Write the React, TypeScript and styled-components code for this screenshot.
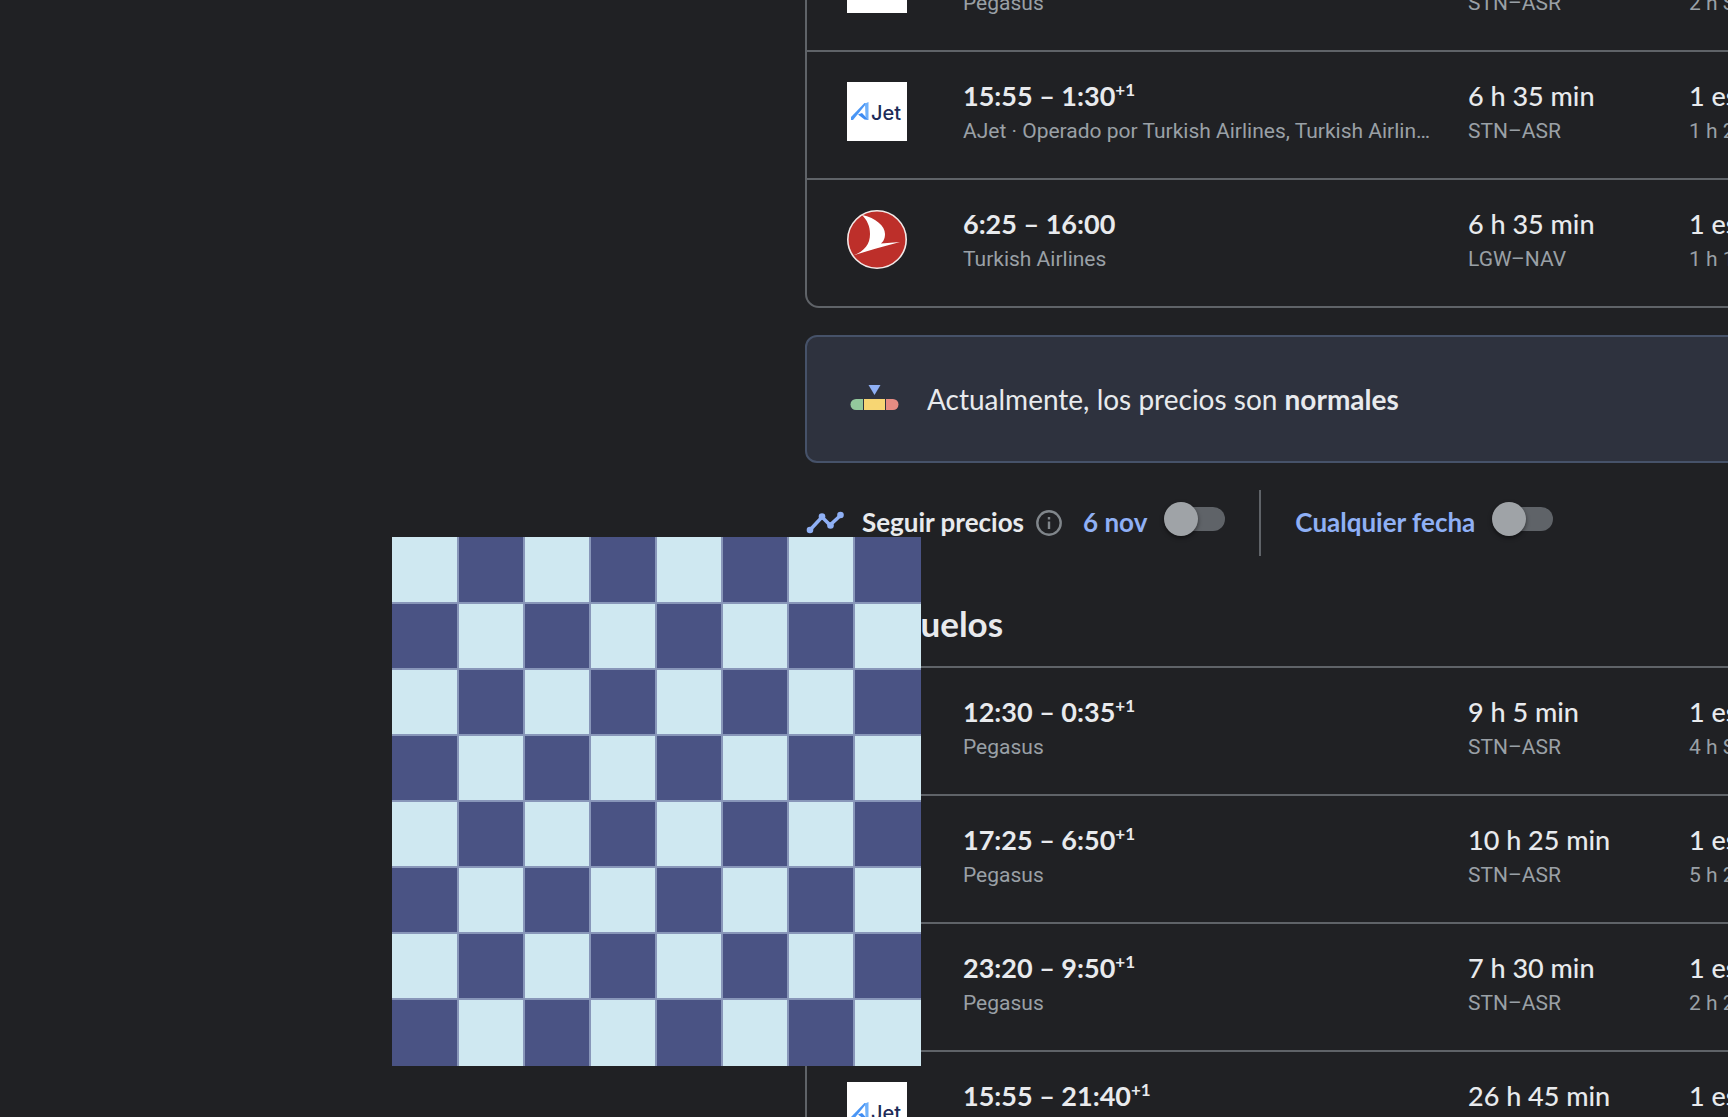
import React from "react";
import styled, { createGlobalStyle } from "styled-components";

const GlobalStyle = createGlobalStyle`
  * { box-sizing: border-box; }
  body { margin: 0; background: #202124; color: #e8eaed; }
`;

const heading = `"Lato", "Liberation Sans", sans-serif`;
const bodyFont = `"Roboto", "Liberation Sans", sans-serif`;

const Page = styled.div`
  position: relative;
  height: 100vh;
  overflow: hidden;
  background: #202124;
  font-family: ${heading};
`;

const Results = styled.main`
  display: flex;
  flex-direction: column;
  margin-top: -78px;
  padding-left: 805px;
  min-width: 2400px;
`;

const FlightList = styled.ul`
  list-style: none;
  margin: 0;
  padding: 0;
  border: 2px solid #5f6368;
  border-radius: 14px;
`;

const FlightRow = styled.li`
  display: grid;
  grid-template-columns: 116px 472px 221px 1fr;
  align-items: start;
  height: 128px;
  padding: 30px 0 0 40px;
  border-bottom: 2px solid #5f6368;
  &:last-child { border-bottom: 0; height: 126px; }
`;

const Logo = styled.div`
  width: 60px;
  height: 59px;
  svg { display: block; }
`;

const Cell = styled.div`
  min-width: 0;
`;

const DurationCell = styled(Cell)`
  margin-left: 33px;
  margin-right: -33px;
`;

const StopsCell = styled(Cell)`
  margin-left: 33px;
`;

const Primary = styled.div<{ $strong?: boolean }>`
  font-size: 27px;
  line-height: 28px;
  font-weight: ${(p) => (p.$strong ? 700 : 500)};
  white-space: nowrap;
`;

const NextDay = styled.sup`
  font-size: 17px;
  line-height: 0;
  vertical-align: 10px;
`;

const Secondary = styled.div`
  margin-top: 6px;
  font-family: ${bodyFont};
  font-size: 21px;
  line-height: 30px;
  color: #9aa0a6;
  white-space: nowrap;
  overflow: hidden;
  text-overflow: ellipsis;
`;

const Insight = styled.section`
  display: flex;
  align-items: center;
  gap: 28px;
  height: 128px;
  margin-top: 27px;
  padding-left: 43px;
  border: 2px solid #465269;
  border-radius: 12px;
  background: #2e323e;
  font-size: 28px;
  line-height: 36px;
  p { margin: 0; }
`;

const TrackBar = styled.section`
  display: flex;
  align-items: center;
  height: 66px;
  margin-top: 27px;
`;

const TrackTitle = styled.span`
  margin: 0 12px 0 18px;
  padding-bottom: 2px;
  font-size: 26px;
  line-height: 32px;
  font-weight: 700;
`;

const InfoButton = styled.button`
  display: flex;
  margin: 0 21px 0 0;
  padding: 0;
  border: 0;
  background: none;
`;

const ToggleLabel = styled.label`
  display: flex;
  align-items: center;
  gap: 17px;
  padding-bottom: 2px;
  font-size: 26px;
  line-height: 32px;
  font-weight: 700;
  color: #8fb0f5;
`;

const Toggle = styled.input`
  appearance: none;
  display: grid;
  grid-template: 34px / 61px;
  align-items: center;
  width: 61px;
  height: 34px;
  margin: 0 0 6px;
  &::before,
  &::after {
    content: "";
    grid-area: 1 / 1;
  }
  &::before {
    justify-self: end;
    width: 57px;
    height: 24px;
    border-radius: 12px;
    background: #5f6368;
  }
  &::after {
    width: 34px;
    height: 34px;
    border-radius: 50%;
    background: #9fa3a7;
    box-shadow: 0 2px 4px rgba(0, 0, 0, 0.5);
  }
`;

const Divider = styled.div`
  width: 2px;
  height: 66px;
  margin: 0 34px;
  background: #5f6368;
`;

const ListTitle = styled.h2`
  margin: 47px 0 23px;
  font-size: 35px;
  line-height: 40px;
  font-weight: 700;
`;

const Board = styled.div`
  position: absolute;
  left: 392px;
  top: 537px;
  width: 529px;
  height: 529px;
  display: grid;
  grid-template: 65px repeat(6, 64px) 1fr / 65px repeat(6, 64px) 1fr;
  gap: 2px;
  background: #8896b9;
`;

const Square = styled.div<{ $dark: boolean }>`
  background: ${(p) => (p.$dark ? "#4a5384" : "#cfe8f1")};
`;

type Carrier = "pegasus" | "ajet" | "turkish";

function CarrierLogo({ carrier }: { carrier: Carrier }) {
  if (carrier === "turkish") {
    return (
      <svg width="60" height="59" viewBox="0 0 60 59" role="img" aria-label="Turkish Airlines">
        <ellipse cx="30" cy="29.500" rx="29.200" ry="28.700" fill="#bd2f2a" stroke="#f3e9e8" strokeWidth="1.600" />
        <path d="M15 5C29 8 38 16 38 24c0 5-2 8-4 9.500L53 32C37 36 21 41 6 45.500 18 41 23 34 23 24 23 16 20 10 15 5Z" fill="#fff" />
      </svg>
    );
  }
  return (
    <svg width="60" height="59" viewBox="0 0 60 59" role="img" aria-label={carrier === "ajet" ? "AJet" : "Pegasus"}>
      <rect width="60" height="59" fill="#fff" />
      {carrier === "ajet" && (
        <>
          <path d="M4 35 17.500 21l2 .5L6 38H4Z" fill="#4a96f5" />
          <path d="M18 21.500 21.500 20v18L18.500 35Z" fill="#6fb0fa" />
          <path d="M11 32.500 15 31l6.500 7-4-.500Z" fill="#3d8bf2" />
          <text x="24" y="37.500" fontFamily="Inter, sans-serif" fontSize="20" fontWeight="500" fill="#1d2b57">Jet</text>
        </>
      )}
    </svg>
  );
}

interface Flight {
  carrier: Carrier;
  time: string;
  nextDay?: boolean;
  airline: string;
  duration: string;
  route: string;
  layover: string;
}

const bestFlights: Flight[] = [
  { carrier: "pegasus", time: "13:25 – 0:35", nextDay: true, airline: "Pegasus", duration: "8 h 10 min", route: "STN–ASR", layover: "2 h SAW" },
  { carrier: "ajet", time: "15:55 – 1:30", nextDay: true, airline: "AJet · Operado por Turkish Airlines, Turkish Airlines", duration: "6 h 35 min", route: "STN–ASR", layover: "1 h 25 min" },
  { carrier: "turkish", time: "6:25 – 16:00", airline: "Turkish Airlines", duration: "6 h 35 min", route: "LGW–NAV", layover: "1 h 15 min" },
];

const otherFlights: Flight[] = [
  { carrier: "pegasus", time: "12:30 – 0:35", nextDay: true, airline: "Pegasus", duration: "9 h 5 min", route: "STN–ASR", layover: "4 h SAW" },
  { carrier: "pegasus", time: "17:25 – 6:50", nextDay: true, airline: "Pegasus", duration: "10 h 25 min", route: "STN–ASR", layover: "5 h 20 min" },
  { carrier: "pegasus", time: "23:20 – 9:50", nextDay: true, airline: "Pegasus", duration: "7 h 30 min", route: "STN–ASR", layover: "2 h 25 min" },
  { carrier: "ajet", time: "15:55 – 21:40", nextDay: true, airline: "AJet", duration: "26 h 45 min", route: "STN–ASR", layover: "21 h" },
];

function Flights({ flights }: { flights: Flight[] }) {
  return (
    <FlightList>
      {flights.map((f) => (
        <FlightRow key={f.time}>
          <Logo><CarrierLogo carrier={f.carrier} /></Logo>
          <Cell>
            <Primary $strong>{f.time}{f.nextDay && <NextDay>+1</NextDay>}</Primary>
            <Secondary>{f.airline}</Secondary>
          </Cell>
          <DurationCell>
            <Primary>{f.duration}</Primary>
            <Secondary>{f.route}</Secondary>
          </DurationCell>
          <StopsCell>
            <Primary>1 escala</Primary>
            <Secondary>{f.layover}</Secondary>
          </StopsCell>
        </FlightRow>
      ))}
    </FlightList>
  );
}

export default function App() {
  return (
    <Page>
      <GlobalStyle />
      <Results>
        <Flights flights={bestFlights} />
        <Insight>
          <svg width="49" height="28" viewBox="0 0 49 28" aria-hidden="true">
            <path d="M18.500 0h12l-6 10Z" fill="#8fb0f5" />
            <path d="M6 14h7v11H6A5.500 5.500 0 0 1 6 14Z" fill="#93c99c" />
            <path d="M14 14h21v11H14Z" fill="#f7d673" />
            <path d="M36 14h7a5.500 5.500 0 0 1 0 11h-7Z" fill="#e68c83" />
          </svg>
          <p>Actualmente, los precios son <b>normales</b></p>
        </Insight>
        <TrackBar>
          <svg width="39" height="24" viewBox="0 0 39 24" aria-hidden="true">
            <path d="M5 19 17 6l8 8L36 4" fill="none" stroke="#8fb0f5" strokeWidth="3.500" />
            <g fill="#8fb0f5"><circle cx="5" cy="19" r="3.300" /><circle cx="17" cy="5.500" r="3.300" /><circle cx="25.500" cy="14.500" r="3.300" /><circle cx="35.500" cy="4" r="3.300" /></g>
          </svg>
          <TrackTitle>Seguir precios</TrackTitle>
          <InfoButton type="button" aria-label="Más información">
            <svg width="26" height="26" viewBox="0 0 26 26" fill="none" stroke="#80868b" strokeWidth="2.400">
              <circle cx="13" cy="13" r="11.700" />
              <path d="M13 11.500V19M13 7v2.500" />
            </svg>
          </InfoButton>
          <ToggleLabel>6 nov<Toggle type="checkbox" role="switch" /></ToggleLabel>
          <Divider />
          <ToggleLabel>Cualquier fecha<Toggle type="checkbox" role="switch" /></ToggleLabel>
        </TrackBar>
        <ListTitle>Otros vuelos</ListTitle>
        <Flights flights={otherFlights} />
      </Results>
      <Board>
        {Array.from({ length: 64 }, (_, i) => (
          <Square key={i} $dark={(Math.floor(i / 8) + i) % 2 === 1} />
        ))}
      </Board>
    </Page>
  );
}
